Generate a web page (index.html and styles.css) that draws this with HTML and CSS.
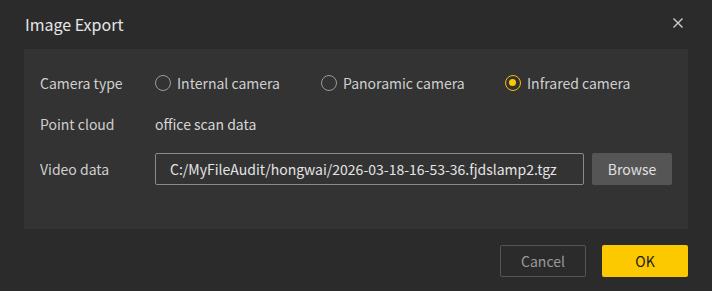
FILE: index.html
```html
<!DOCTYPE html>
<html>
<head>
<meta charset="utf-8">
<link rel="stylesheet" href="styles.css">
</head>
<body>
<div class="dialog">
  <div class="header">
    <span class="title">Image Export</span>
    <svg class="close" width="12" height="12" viewBox="0 0 12 12"><path d="M1.5 1.5 L10.5 10.5 M10.5 1.5 L1.5 10.5" stroke="#d0d0d0" stroke-width="1.4" fill="none"/></svg>
  </div>
  <div class="panel">
    <div class="row row-camera">
      <div class="label">Camera type</div>
      <div class="radios">
        <label class="radio"><span class="dot"></span>Internal camera</label>
        <label class="radio"><span class="dot"></span>Panoramic camera</label>
        <label class="radio checked"><span class="dot"></span>Infrared camera</label>
      </div>
    </div>
    <div class="row row-cloud">
      <div class="label">Point cloud</div>
      <div class="value">office scan data</div>
    </div>
    <div class="row row-video">
      <div class="label">Video data</div>
      <div class="input">C:/MyFileAudit/hongwai/2026-03-18-16-53-36.fjdslamp2.tgz</div>
      <div class="btn browse">Browse</div>
    </div>
  </div>
  <div class="footer">
    <div class="btn cancel">Cancel</div>
    <div class="btn ok">OK</div>
  </div>
</div>
</body>
</html>
```

FILE: styles.css
```css
html, body {
  margin: 0;
  padding: 0;
  background: #2b2b2c;
  width: 712px;
  height: 291px;
  overflow: hidden;
}
body {
  font-family: "Noto Sans CJK SC", "Noto Sans", sans-serif;
  color: #d6d6d6;
  font-size: 14px;
}
.dialog {
  padding: 0 24px 0 24px;
}
.header {
  height: 49px;
  display: flex;
  align-items: center;
  justify-content: space-between;
}
.title {
  font-size: 16px;
  color: #e6e6e6;
  margin-left: 1px;
  margin-top: -2px;
}
.close {
  margin-right: 4px;
  margin-top: -4px;
}
.panel {
  background: #333333;
  height: 180px;
  box-sizing: border-box;
  padding: 18px 16px 0 16px;
}
.row {
  display: flex;
  align-items: center;
}
.row-camera { height: 32px; }
.row-cloud { height: 32px; margin-top: 9px; }
.row-video { height: 32px; margin-top: 13px; }
.label {
  width: 115px;
  color: #cfcfcf;
}
.radios {
  display: flex;
  gap: 0;
}
.radio {
  display: flex;
  align-items: center;
  color: #cfcfcf;
}
.radio:nth-child(1) { width: 166px; }
.radio:nth-child(2) { width: 184px; }
.dot {
  width: 16px;
  height: 16px;
  border-radius: 50%;
  border: 1px solid #9a9a9a;
  box-sizing: border-box;
  margin-right: 6px;
  position: relative;
}
.checked .dot {
  border: 1.5px solid #f5c000;
}
.checked .dot::after {
  content: "";
  position: absolute;
  left: 3px;
  top: 3px;
  width: 7px;
  height: 7px;
  border-radius: 50%;
  background: #fcc800;
}
.value { color: #d6d6d6; }
.input {
  width: 429px;
  height: 32px;
  box-sizing: border-box;
  border: 1px solid #8a8a8a;
  border-radius: 2px;
  padding: 0 0 0 14px;
  display: flex;
  align-items: center;
  color: #e4e4e4;
  white-space: nowrap;
  overflow: hidden;
}
.btn {
  height: 32px;
  box-sizing: border-box;
  display: flex;
  align-items: center;
  justify-content: center;
  border-radius: 2px;
}
.browse {
  margin-left: 8px;
  width: 80px;
  background: #555555;
  color: #e0e0e0;
}
.footer {
  display: flex;
  justify-content: flex-end;
  margin-top: 16px;
  gap: 16px;
}
.cancel {
  width: 86px;
  border: 1px solid #555;
  color: #9a9a9a;
}
.ok {
  width: 86px;
  background: #fcc800;
  color: #1c1c1c;
}
```
